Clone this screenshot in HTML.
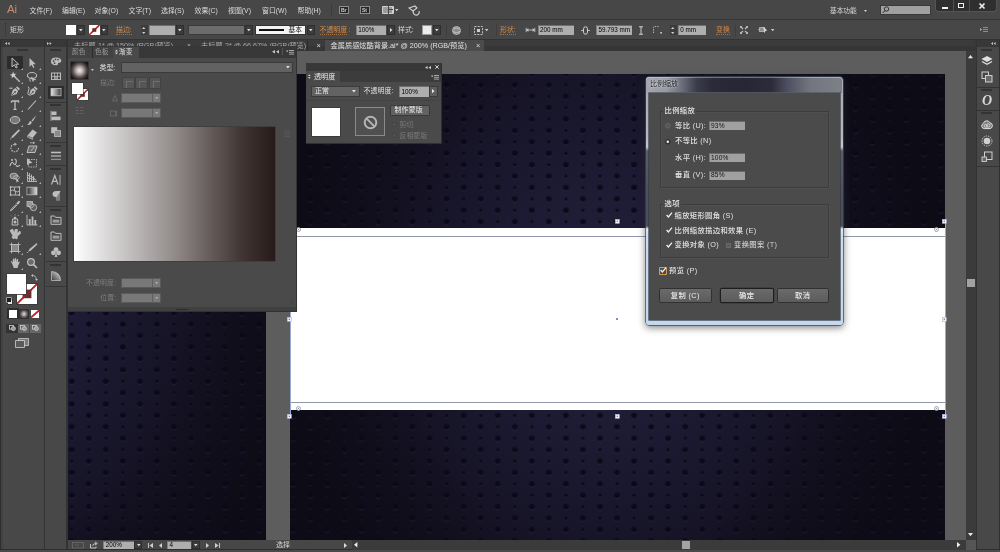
<!DOCTYPE html>
<html lang="zh-CN"><head><meta charset="utf-8"><title>Adobe Illustrator</title>
<style>
html,body{margin:0;padding:0}
body{width:1000px;height:552px;position:relative;overflow:hidden;background:#474747;font-family:"Liberation Sans","Noto Sans CJK SC",sans-serif;font-size:6.7px;color:#d6d6d6;-webkit-font-smoothing:antialiased;will-change:transform;filter:blur(0.4px)}
.t{position:absolute;white-space:nowrap;line-height:10px;height:10px}
.d{font-family:"Liberation Sans","Noto Sans CJK SC",sans-serif;font-weight:500;letter-spacing:0.35px}
svg{overflow:visible;display:block}
</style></head><body>

<div style="position:absolute;left:68px;top:51px;width:908px;height:489px;background:#5d5d5d;"></div>
<svg style="position:absolute;left:290px;top:73.5px;overflow:hidden" width="655" height="466.5" viewBox="0 0 655 466.5"><defs><pattern id="dots" x="3.26" y="-0.3" width="34.08" height="22.8" patternUnits="userSpaceOnUse"><circle cx="0.00" cy="0.00" r="3.3" fill="url(#dotsh)"/><path d="M-2.90 1.20 A3.2 3.2 0 0 0 2.90 1.20" fill="none" stroke="#fff" stroke-opacity="0.07" stroke-width="0.9"/><circle cx="34.08" cy="0.00" r="3.3" fill="url(#dotsh)"/><path d="M31.18 1.20 A3.2 3.2 0 0 0 36.98 1.20" fill="none" stroke="#fff" stroke-opacity="0.07" stroke-width="0.9"/><circle cx="0.00" cy="22.80" r="3.3" fill="url(#dotsh)"/><path d="M-2.90 24.00 A3.2 3.2 0 0 0 2.90 24.00" fill="none" stroke="#fff" stroke-opacity="0.07" stroke-width="0.9"/><circle cx="34.08" cy="22.80" r="3.3" fill="url(#dotsh)"/><path d="M31.18 24.00 A3.2 3.2 0 0 0 36.98 24.00" fill="none" stroke="#fff" stroke-opacity="0.07" stroke-width="0.9"/><circle cx="17.04" cy="11.40" r="3.3" fill="url(#dotsh)"/><path d="M14.14 12.60 A3.2 3.2 0 0 0 19.94 12.60" fill="none" stroke="#fff" stroke-opacity="0.07" stroke-width="0.9"/><circle cx="17.04" cy="0.00" r="1.9" fill="url(#dotsh)"/><path d="M15.44 0.80 A1.8 1.8 0 0 0 18.64 0.80" fill="none" stroke="#fff" stroke-opacity="0.05" stroke-width="0.8"/><circle cx="17.04" cy="22.80" r="1.9" fill="url(#dotsh)"/><path d="M15.44 23.60 A1.8 1.8 0 0 0 18.64 23.60" fill="none" stroke="#fff" stroke-opacity="0.05" stroke-width="0.8"/><circle cx="0.00" cy="11.40" r="1.9" fill="url(#dotsh)"/><path d="M-1.60 12.20 A1.8 1.8 0 0 0 1.60 12.20" fill="none" stroke="#fff" stroke-opacity="0.05" stroke-width="0.8"/><circle cx="34.08" cy="11.40" r="1.9" fill="url(#dotsh)"/><path d="M32.48 12.20 A1.8 1.8 0 0 0 35.68 12.20" fill="none" stroke="#fff" stroke-opacity="0.05" stroke-width="0.8"/></pattern><radialGradient id="dotsh"><stop offset="0" stop-color="#0b0919" stop-opacity="1"/><stop offset="0.65" stop-color="#0b0919" stop-opacity="0.95"/><stop offset="1" stop-color="#0b0919" stop-opacity="0.45"/></radialGradient><radialGradient id="glow" cx="0" cy="0" r="1" gradientUnits="userSpaceOnUse" gradientTransform="translate(318 234) scale(325 400)"><stop offset="0" stop-color="#22203b"/><stop offset="0.3" stop-color="#1e1c35"/><stop offset="0.6" stop-color="#161426"/><stop offset="0.8" stop-color="#100e1b"/><stop offset="1" stop-color="#0d0b15"/></radialGradient></defs><rect width="655" height="467" fill="url(#glow)"/><rect width="655" height="467" fill="url(#dots)"/></svg>
<svg style="position:absolute;left:68px;top:73.5px;overflow:hidden" width="198" height="466.5" viewBox="0 0 198 466.5"><defs><pattern id="dots2" x="20.78" y="-0.3" width="34.08" height="22.8" patternUnits="userSpaceOnUse"><circle cx="0.00" cy="0.00" r="3.3" fill="url(#dots2h)"/><path d="M-2.90 1.20 A3.2 3.2 0 0 0 2.90 1.20" fill="none" stroke="#fff" stroke-opacity="0.07" stroke-width="0.9"/><circle cx="34.08" cy="0.00" r="3.3" fill="url(#dots2h)"/><path d="M31.18 1.20 A3.2 3.2 0 0 0 36.98 1.20" fill="none" stroke="#fff" stroke-opacity="0.07" stroke-width="0.9"/><circle cx="0.00" cy="22.80" r="3.3" fill="url(#dots2h)"/><path d="M-2.90 24.00 A3.2 3.2 0 0 0 2.90 24.00" fill="none" stroke="#fff" stroke-opacity="0.07" stroke-width="0.9"/><circle cx="34.08" cy="22.80" r="3.3" fill="url(#dots2h)"/><path d="M31.18 24.00 A3.2 3.2 0 0 0 36.98 24.00" fill="none" stroke="#fff" stroke-opacity="0.07" stroke-width="0.9"/><circle cx="17.04" cy="11.40" r="3.3" fill="url(#dots2h)"/><path d="M14.14 12.60 A3.2 3.2 0 0 0 19.94 12.60" fill="none" stroke="#fff" stroke-opacity="0.07" stroke-width="0.9"/><circle cx="17.04" cy="0.00" r="1.9" fill="url(#dots2h)"/><path d="M15.44 0.80 A1.8 1.8 0 0 0 18.64 0.80" fill="none" stroke="#fff" stroke-opacity="0.05" stroke-width="0.8"/><circle cx="17.04" cy="22.80" r="1.9" fill="url(#dots2h)"/><path d="M15.44 23.60 A1.8 1.8 0 0 0 18.64 23.60" fill="none" stroke="#fff" stroke-opacity="0.05" stroke-width="0.8"/><circle cx="0.00" cy="11.40" r="1.9" fill="url(#dots2h)"/><path d="M-1.60 12.20 A1.8 1.8 0 0 0 1.60 12.20" fill="none" stroke="#fff" stroke-opacity="0.05" stroke-width="0.8"/><circle cx="34.08" cy="11.40" r="1.9" fill="url(#dots2h)"/><path d="M32.48 12.20 A1.8 1.8 0 0 0 35.68 12.20" fill="none" stroke="#fff" stroke-opacity="0.05" stroke-width="0.8"/></pattern><radialGradient id="dots2h"><stop offset="0" stop-color="#0b0919" stop-opacity="1"/><stop offset="0.65" stop-color="#0b0919" stop-opacity="0.95"/><stop offset="1" stop-color="#0b0919" stop-opacity="0.45"/></radialGradient><radialGradient id="glow2" cx="0" cy="0" r="1" gradientUnits="userSpaceOnUse" gradientTransform="translate(-95 234) scale(330 380)"><stop offset="0" stop-color="#22203b"/><stop offset="0.3" stop-color="#1e1c35"/><stop offset="0.6" stop-color="#161426"/><stop offset="0.8" stop-color="#100e1b"/><stop offset="1" stop-color="#0d0b15"/></radialGradient></defs><rect width="198" height="467" fill="url(#glow2)"/><rect width="198" height="467" fill="url(#dots2)"/></svg>
<div style="position:absolute;left:290px;top:228.3px;width:655px;height:181.7px;background:#ffffff;"></div>
<div style="position:absolute;left:290px;top:236px;width:655px;height:1px;background:#8f97a8;"></div>
<div style="position:absolute;left:290px;top:402px;width:655px;height:1px;background:#8f97a8;"></div>
<div style="position:absolute;left:289.5px;top:221px;width:0.8px;height:196px;background:#9aa8d4;"></div>
<div style="position:absolute;left:944.6px;top:221px;width:0.8px;height:196px;background:#9aa8d4;"></div>
<svg style="position:absolute;left:287.2px;top:219.2px;" width="4.6" height="4.6" viewBox="0 0 4.6 4.6"><rect x="0.3" y="0.3" width="4" height="4" fill="#f4f6fb" stroke="#aab4dc" stroke-width="0.6"/><rect x="1.7" y="1.7" width="1.2" height="1.2" fill="#5c6894"/></svg>
<svg style="position:absolute;left:614.7px;top:219.2px;" width="4.6" height="4.6" viewBox="0 0 4.6 4.6"><rect x="0.3" y="0.3" width="4" height="4" fill="#f4f6fb" stroke="#aab4dc" stroke-width="0.6"/><rect x="1.7" y="1.7" width="1.2" height="1.2" fill="#5c6894"/></svg>
<svg style="position:absolute;left:942.4000000000001px;top:219.2px;" width="4.6" height="4.6" viewBox="0 0 4.6 4.6"><rect x="0.3" y="0.3" width="4" height="4" fill="#f4f6fb" stroke="#aab4dc" stroke-width="0.6"/><rect x="1.7" y="1.7" width="1.2" height="1.2" fill="#5c6894"/></svg>
<svg style="position:absolute;left:287.2px;top:316.7px;" width="4.6" height="4.6" viewBox="0 0 4.6 4.6"><rect x="0.3" y="0.3" width="4" height="4" fill="#f4f6fb" stroke="#aab4dc" stroke-width="0.6"/><rect x="1.7" y="1.7" width="1.2" height="1.2" fill="#5c6894"/></svg>
<svg style="position:absolute;left:942.4000000000001px;top:316.7px;" width="4.6" height="4.6" viewBox="0 0 4.6 4.6"><rect x="0.3" y="0.3" width="4" height="4" fill="#f4f6fb" stroke="#aab4dc" stroke-width="0.6"/><rect x="1.7" y="1.7" width="1.2" height="1.2" fill="#5c6894"/></svg>
<svg style="position:absolute;left:287.2px;top:414.2px;" width="4.6" height="4.6" viewBox="0 0 4.6 4.6"><rect x="0.3" y="0.3" width="4" height="4" fill="#f4f6fb" stroke="#aab4dc" stroke-width="0.6"/><rect x="1.7" y="1.7" width="1.2" height="1.2" fill="#5c6894"/></svg>
<svg style="position:absolute;left:614.7px;top:414.2px;" width="4.6" height="4.6" viewBox="0 0 4.6 4.6"><rect x="0.3" y="0.3" width="4" height="4" fill="#f4f6fb" stroke="#aab4dc" stroke-width="0.6"/><rect x="1.7" y="1.7" width="1.2" height="1.2" fill="#5c6894"/></svg>
<svg style="position:absolute;left:942.4000000000001px;top:414.2px;" width="4.6" height="4.6" viewBox="0 0 4.6 4.6"><rect x="0.3" y="0.3" width="4" height="4" fill="#f4f6fb" stroke="#aab4dc" stroke-width="0.6"/><rect x="1.7" y="1.7" width="1.2" height="1.2" fill="#5c6894"/></svg>
<div style="position:absolute;left:615.7px;top:317.7px;width:2.6px;height:2.6px;background:#7d8fc0;"></div>
<svg style="position:absolute;left:295.5px;top:227.1px;" width="5" height="5" viewBox="0 0 5 5"><circle cx="2.5" cy="2.5" r="2" fill="#fff" stroke="#8a93a8" stroke-width="0.8"/><circle cx="2.5" cy="2.5" r="0.7" fill="#8a93a8"/></svg>
<svg style="position:absolute;left:934.0px;top:227.1px;" width="5" height="5" viewBox="0 0 5 5"><circle cx="2.5" cy="2.5" r="2" fill="#fff" stroke="#8a93a8" stroke-width="0.8"/><circle cx="2.5" cy="2.5" r="0.7" fill="#8a93a8"/></svg>
<svg style="position:absolute;left:295.5px;top:406.0px;" width="5" height="5" viewBox="0 0 5 5"><circle cx="2.5" cy="2.5" r="2" fill="#fff" stroke="#8a93a8" stroke-width="0.8"/><circle cx="2.5" cy="2.5" r="0.7" fill="#8a93a8"/></svg>
<svg style="position:absolute;left:934.0px;top:406.0px;" width="5" height="5" viewBox="0 0 5 5"><circle cx="2.5" cy="2.5" r="2" fill="#fff" stroke="#8a93a8" stroke-width="0.8"/><circle cx="2.5" cy="2.5" r="0.7" fill="#8a93a8"/></svg>
<div style="position:absolute;left:68px;top:39.5px;width:908px;height:11.5px;background:#3b3b3b;"></div>
<div style="position:absolute;left:68px;top:46px;width:908px;height:5px;background:#363636;"></div>
<div class="t" style="left:74px;top:40.6px;color:#a8a8a8;font-size:7.2px;">未标题-1* @ 150% (RGB/预览)</div>
<div class="t" style="left:187px;top:40.6px;color:#c0c0c0;font-size:7px;">×</div>
<div class="t" style="left:201px;top:40.6px;color:#a8a8a8;font-size:7.2px;">未标题-2* @ 66.67% (RGB/预览)</div>
<div style="position:absolute;left:307px;top:40px;width:1px;height:11px;background:#2c2c2c;"></div>
<div class="t" style="left:316.5px;top:40.6px;color:#d8d8d8;font-size:7.5px;">×</div>
<div style="position:absolute;left:325.3px;top:39.6px;width:158.4px;height:11.4px;background:#4b4b4b;"></div>
<div class="t" style="left:330.6px;top:40.6px;color:#e0e0e0;font-size:7.2px;">金属质感炫酷背景.ai* @ 200% (RGB/预览)</div>
<div class="t" style="left:476px;top:40.6px;color:#d8d8d8;font-size:7.5px;">×</div>
<div style="position:absolute;left:0px;top:0px;width:1000px;height:18.5px;background:#474747;"></div>
<div style="position:absolute;left:0px;top:18.5px;width:1000px;height:1.1px;background:#363636;"></div>
<div class="t" style="left:7px;top:2px;height:14px;line-height:14px;font-size:11.5px;font-weight:normal;color:#c98d6c;letter-spacing:-0.2px">Ai</div>
<div class="t" style="left:29.5px;top:5.5px;color:#dcdcdc;font-size:6.9px;">文件(F)</div>
<div class="t" style="left:62px;top:5.5px;color:#dcdcdc;font-size:6.9px;">编辑(E)</div>
<div class="t" style="left:94.5px;top:5.5px;color:#dcdcdc;font-size:6.9px;">对象(O)</div>
<div class="t" style="left:128.5px;top:5.5px;color:#dcdcdc;font-size:6.9px;">文字(T)</div>
<div class="t" style="left:161px;top:5.5px;color:#dcdcdc;font-size:6.9px;">选择(S)</div>
<div class="t" style="left:194.5px;top:5.5px;color:#dcdcdc;font-size:6.9px;">效果(C)</div>
<div class="t" style="left:228px;top:5.5px;color:#dcdcdc;font-size:6.9px;">视图(V)</div>
<div class="t" style="left:262px;top:5.5px;color:#dcdcdc;font-size:6.9px;">窗口(W)</div>
<div class="t" style="left:297.5px;top:5.5px;color:#dcdcdc;font-size:6.9px;">帮助(H)</div>
<div style="position:absolute;left:330.5px;top:4px;width:1px;height:12px;background:#3a3a3a;"></div>
<div style="position:absolute;left:339px;top:5.5px;width:10px;height:8.5px;background:#262626;box-sizing:border-box;border:0.8px solid #8e8e8e;border-radius:0.5px"></div>
<div class="t" style="left:341px;top:5px;color:#d0d0d0;font-size:5px;font-weight:bold">Br</div>
<div style="position:absolute;left:360px;top:5.5px;width:10px;height:8.5px;background:#262626;box-sizing:border-box;border:0.8px solid #8e8e8e;border-radius:0.5px"></div>
<div class="t" style="left:362px;top:5px;color:#d0d0d0;font-size:5px;font-weight:bold">St</div>
<div style="position:absolute;left:382px;top:5.5px;width:11.5px;height:8.5px;background:#d0d0d0;border-radius:1px"><div style="position:absolute;left:1px;top:1px;width:4.5px;height:6.5px;background:#9a9a9a"></div><div style="position:absolute;left:6.3px;top:1px;width:4.2px;height:2.8px;background:#9a9a9a"></div><div style="position:absolute;left:6.3px;top:4.6px;width:4.2px;height:2.9px;background:#9a9a9a"></div><div style="position:absolute;left:5.5px;top:0;width:0.8px;height:8.5px;background:#474747"></div><div style="position:absolute;left:6.3px;top:3.8px;width:5.2px;height:0.8px;background:#474747"></div></div>
<svg style="position:absolute;left:395.25px;top:8.9px" width="3.5" height="2.2" viewBox="0 0 3.5 2.2"><polygon points="0,0 3.5,0 1.75,2.2" fill="#d0d0d0"/></svg>
<svg style="position:absolute;left:408px;top:5px;" width="13" height="10" viewBox="0 0 13 10"><path d="M1 3 L7 1 L9 3 L5 6 Z M6 5 a3 3 0 1 0 5 1" fill="none" stroke="#cfcfcf" stroke-width="1.1"/></svg>
<div class="t" style="left:830px;top:5.5px;color:#d8d8d8;font-size:6.7px;">基本功能</div>
<svg style="position:absolute;left:863.5px;top:10.0px" width="3" height="2" viewBox="0 0 3 2"><polygon points="0,0 3,0 1.5,2" fill="#d0d0d0"/></svg>
<div style="position:absolute;left:880.2px;top:5.2px;width:50.6px;height:9.5px;background:#a0a0a0;box-sizing:border-box;border:0.6px solid #3a3a3a"></div>
<svg style="position:absolute;left:882px;top:6px;" width="8" height="8" viewBox="0 0 8 8"><circle cx="4.5" cy="3" r="2.2" fill="none" stroke="#2a2a2a" stroke-width="0.9"/><path d="M3 4.6 L0.8 7" stroke="#2a2a2a" stroke-width="1"/></svg>
<div style="position:absolute;left:936.3px;top:-1px;width:59.5px;height:11.9px;background:#2f2f2f;border-radius:0 0 2.5px 2.5px;box-shadow:0 0 0 0.7px #5a5a5a"></div>
<div style="position:absolute;left:953px;top:0px;width:0.9px;height:10.9px;background:#505050;"></div>
<div style="position:absolute;left:969px;top:0px;width:0.9px;height:10.9px;background:#505050;"></div>
<div style="position:absolute;left:942px;top:7px;width:6px;height:1.8px;background:#f0f0f0;"></div>
<div style="position:absolute;left:958px;top:3.2px;width:6.2px;height:5.2px;background:transparent;box-sizing:border-box;border:1.4px solid #f0f0f0"></div>
<svg style="position:absolute;left:978.5px;top:3px;" width="6" height="6" viewBox="0 0 6 6"><path d="M0.5 0.5 L5.5 5.5 M5.5 0.5 L0.5 5.5" stroke="#f0f0f0" stroke-width="1.6"/></svg>
<div style="position:absolute;left:0px;top:19.6px;width:1000px;height:19px;background:#474747;"></div>
<div style="position:absolute;left:0px;top:38.6px;width:1000px;height:1.4px;background:#333;"></div>
<div style="position:absolute;left:5px;top:23px;width:1px;height:1px;background:#2e2e2e;"></div>
<div style="position:absolute;left:5px;top:25px;width:1px;height:1px;background:#2e2e2e;"></div>
<div style="position:absolute;left:5px;top:27px;width:1px;height:1px;background:#2e2e2e;"></div>
<div style="position:absolute;left:5px;top:29px;width:1px;height:1px;background:#2e2e2e;"></div>
<div style="position:absolute;left:5px;top:31px;width:1px;height:1px;background:#2e2e2e;"></div>
<div style="position:absolute;left:5px;top:33px;width:1px;height:1px;background:#2e2e2e;"></div>
<div style="position:absolute;left:5px;top:35px;width:1px;height:1px;background:#2e2e2e;"></div>
<div class="t" style="left:10px;top:24.5px;color:#d8d8d8;font-size:6.9px;">矩形</div>
<div style="position:absolute;left:65.5px;top:25px;width:10.5px;height:10px;background:#ffffff;"></div>
<div style="position:absolute;left:77px;top:25px;width:7.5px;height:10px;background:#3c3c3c;box-sizing:border-box;border:0.5px solid #2e2e2e"></div>
<svg style="position:absolute;left:78.95px;top:29.2px" width="3.6" height="2.2" viewBox="0 0 3.6 2.2"><polygon points="0,0 3.6,0 1.8,2.2" fill="#dcdcdc"/></svg>
<div style="position:absolute;left:89px;top:25px;width:10.5px;height:10px;background:#ffffff;overflow:hidden"><svg width="10.5" height="10" style="position:absolute;left:0;top:0"><path d="M0 10 L10.5 0" stroke="#c0202a" stroke-width="1.6"/><rect x="3.3" y="3.2" width="4" height="3.6" fill="#6a2a2a"/></svg></div>
<div style="position:absolute;left:100.5px;top:25px;width:7.5px;height:10px;background:#3c3c3c;box-sizing:border-box;border:0.5px solid #2e2e2e"></div>
<svg style="position:absolute;left:102.45px;top:29.2px" width="3.6" height="2.2" viewBox="0 0 3.6 2.2"><polygon points="0,0 3.6,0 1.8,2.2" fill="#dcdcdc"/></svg>
<div class="t" style="left:116px;top:24.5px;color:#d78b45;font-size:6.9px;border-bottom:0.6px dotted rgba(215,139,69,0.65);height:9px;line-height:10px">描边:</div>
<div style="position:absolute;left:140.5px;top:25px;width:7px;height:10px;background:#3c3c3c;"></div>
<svg style="position:absolute;left:142.3px;top:26.5px" width="3.4" height="2" viewBox="0 0 3.4 2"><polygon points="0,2 3.4,2 1.7,0" fill="#d0d0d0"/></svg>
<svg style="position:absolute;left:142.3px;top:31.5px" width="3.4" height="2" viewBox="0 0 3.4 2"><polygon points="0,0 3.4,0 1.7,2" fill="#d0d0d0"/></svg>
<div style="position:absolute;left:149px;top:25px;width:26px;height:10px;background:#aeaeae;box-sizing:border-box;border-top:1px solid #6e6e6e;border-left:1px solid #808080"></div>
<div style="position:absolute;left:176px;top:25px;width:8px;height:10px;background:#3c3c3c;box-sizing:border-box;border:0.5px solid #2e2e2e"></div>
<svg style="position:absolute;left:178.2px;top:29.2px" width="3.6" height="2.2" viewBox="0 0 3.6 2.2"><polygon points="0,0 3.6,0 1.8,2.2" fill="#dcdcdc"/></svg>
<div style="position:absolute;left:188px;top:25px;width:57px;height:10px;background:#6c6c6c;box-sizing:border-box;border:0.5px solid #3a3a3a"></div>
<div style="position:absolute;left:245px;top:25px;width:7.5px;height:10px;background:#3c3c3c;box-sizing:border-box;border:0.5px solid #2e2e2e"></div>
<svg style="position:absolute;left:246.95px;top:29.2px" width="3.6" height="2.2" viewBox="0 0 3.6 2.2"><polygon points="0,0 3.6,0 1.8,2.2" fill="#dcdcdc"/></svg>
<div style="position:absolute;left:255px;top:24.7px;width:50.5px;height:10px;background:#f4f4f4;box-sizing:border-box;border:0.5px solid #333"></div>
<div style="position:absolute;left:258.7px;top:29px;width:25.5px;height:1.6px;background:#111;"></div>
<div class="t" style="left:288.5px;top:24.7px;color:#111;font-size:6.7px;">基本</div>
<div style="position:absolute;left:307px;top:25px;width:7.5px;height:10px;background:#3c3c3c;box-sizing:border-box;border:0.5px solid #2e2e2e"></div>
<svg style="position:absolute;left:308.95px;top:29.2px" width="3.6" height="2.2" viewBox="0 0 3.6 2.2"><polygon points="0,0 3.6,0 1.8,2.2" fill="#dcdcdc"/></svg>
<div class="t" style="left:319.5px;top:24.5px;color:#d78b45;font-size:6.9px;border-bottom:0.6px dotted rgba(215,139,69,0.65);height:9px;line-height:10px">不透明度</div>
<div class="t" style="left:348.5px;top:24.5px;color:#d78b45;font-size:6.9px;">:</div>
<div style="position:absolute;left:355.7px;top:24.7px;width:30px;height:10px;background:#aeaeae;box-sizing:border-box;border-top:1px solid #6e6e6e;border-left:1px solid #808080"><div class="t" style="left:1.5px;top:-0.5999999999999996px;color:#000;font-size:6.3px">100%</div></div>
<div style="position:absolute;left:387px;top:25px;width:7.5px;height:10px;background:#3c3c3c;box-sizing:border-box;border:0.5px solid #2e2e2e"></div>
<svg style="position:absolute;left:389.75px;top:28.0px" width="2.4" height="4" viewBox="0 0 2.4 4"><polygon points="0,0 2.4,2.0 0,4" fill="#dcdcdc"/></svg>
<div class="t" style="left:398px;top:24.5px;color:#d8d8d8;font-size:6.9px;">样式:</div>
<div style="position:absolute;left:422px;top:25px;width:10px;height:10px;background:#ececec;box-sizing:border-box;border:0.5px solid #999"></div>
<div style="position:absolute;left:433px;top:25px;width:7.5px;height:10px;background:#3c3c3c;box-sizing:border-box;border:0.5px solid #2e2e2e"></div>
<svg style="position:absolute;left:434.95px;top:29.2px" width="3.6" height="2.2" viewBox="0 0 3.6 2.2"><polygon points="0,0 3.6,0 1.8,2.2" fill="#dcdcdc"/></svg>
<div style="position:absolute;left:445.5px;top:23px;width:0.9px;height:14px;background:#3e3e3e;"></div>
<svg style="position:absolute;left:451.5px;top:25.5px;" width="9" height="9" viewBox="0 0 9 9"><circle cx="4.5" cy="4.5" r="4" fill="#8a8a8a" stroke="#c8c8c8" stroke-width="0.8"/><path d="M2 3 Q4.5 1 7 3 M1 5.5 Q4.5 8 8 5.5" stroke="#d8d8d8" stroke-width="0.7" fill="none"/></svg>
<div style="position:absolute;left:469px;top:23px;width:0.9px;height:14px;background:#3e3e3e;"></div>
<svg style="position:absolute;left:474px;top:25.5px;" width="9" height="9" viewBox="0 0 9 9"><rect x="0.5" y="0.5" width="8" height="8" fill="none" stroke="#cfcfcf" stroke-width="0.9" stroke-dasharray="2 1.2"/><rect x="3" y="3" width="3" height="3" fill="#cfcfcf"/></svg>
<svg style="position:absolute;left:485.3px;top:29.4px" width="3.4" height="2.2" viewBox="0 0 3.4 2.2"><polygon points="0,0 3.4,0 1.7,2.2" fill="#d0d0d0"/></svg>
<div style="position:absolute;left:496px;top:23px;width:0.9px;height:14px;background:#3e3e3e;"></div>
<div class="t" style="left:500px;top:24.5px;color:#d78b45;font-size:6.9px;border-bottom:0.6px dotted rgba(215,139,69,0.65);height:9px;line-height:10px">形状:</div>
<svg style="position:absolute;left:525.5px;top:27px;" width="9" height="6" viewBox="0 0 9 6"><path d="M0 3 L2.4 1.2 L2.4 4.8 Z M9 3 L6.6 1.2 L6.6 4.8 Z" fill="#cfcfcf"/><path d="M2 3 L7 3 M0.2 0.8 V5.2 M8.8 0.8 V5.2" stroke="#cfcfcf" stroke-width="0.8"/></svg>
<div style="position:absolute;left:537.5px;top:24.7px;width:36px;height:10px;background:#aeaeae;box-sizing:border-box;border-top:1px solid #6e6e6e;border-left:1px solid #808080"><div class="t" style="left:1.5px;top:-0.5999999999999996px;color:#000;font-size:6.3px">200 mm</div></div>
<svg style="position:absolute;left:581px;top:25.5px;" width="9" height="9" viewBox="0 0 9 9"><rect x="2.5" y="0.8" width="4" height="7.4" rx="2" fill="none" stroke="#cfcfcf" stroke-width="1"/><path d="M0 4.5 L2 4.5 M7 4.5 L9 4.5" stroke="#cfcfcf" stroke-width="0.8"/></svg>
<div style="position:absolute;left:596px;top:24.7px;width:35.7px;height:10px;background:#aeaeae;box-sizing:border-box;border-top:1px solid #6e6e6e;border-left:1px solid #808080"><div class="t" style="left:1.5px;top:-0.5999999999999996px;color:#000;font-size:6.3px">59.793 mm</div></div>
<svg style="position:absolute;left:637.5px;top:25.5px;" width="6" height="9" viewBox="0 0 6 9"><path d="M3 0.5 L3 8.5 M1 0.8 L5 0.8 M1 8.2 L5 8.2" stroke="#cfcfcf" stroke-width="1"/></svg>
<svg style="position:absolute;left:652.5px;top:26px;" width="9" height="8" viewBox="0 0 9 8"><path d="M0.5 7 L0.5 1.5 Q0.5 0.5 1.5 0.5 L6 0.5" fill="none" stroke="#bdbdbd" stroke-width="0.9" stroke-dasharray="1.4 1"/><rect x="7.3" y="6" width="1.6" height="1.6" fill="#cfcfcf"/></svg>
<div style="position:absolute;left:669.5px;top:25px;width:7px;height:10px;background:#3c3c3c;"></div>
<svg style="position:absolute;left:671.3px;top:26.5px" width="3.4" height="2" viewBox="0 0 3.4 2"><polygon points="0,2 3.4,2 1.7,0" fill="#d0d0d0"/></svg>
<svg style="position:absolute;left:671.3px;top:31.5px" width="3.4" height="2" viewBox="0 0 3.4 2"><polygon points="0,0 3.4,0 1.7,2" fill="#d0d0d0"/></svg>
<div style="position:absolute;left:677.7px;top:24.7px;width:28.6px;height:10px;background:#aeaeae;box-sizing:border-box;border-top:1px solid #6e6e6e;border-left:1px solid #808080"><div class="t" style="left:1.5px;top:-0.5999999999999996px;color:#000;font-size:6.3px">0 mm</div></div>
<div class="t" style="left:716px;top:24.5px;color:#d78b45;font-size:6.9px;border-bottom:0.6px dotted rgba(215,139,69,0.65);height:9px;line-height:10px">变换</div>
<div style="position:absolute;left:734.5px;top:23px;width:0.9px;height:14px;background:#3e3e3e;"></div>
<svg style="position:absolute;left:739.5px;top:26px;" width="8" height="8" viewBox="0 0 8 8"><path d="M0.8 0.8 L3 3 M7.2 0.8 L5 3 M0.8 7.2 L3 5 M7.2 7.2 L5 5" stroke="#c4c4c4" stroke-width="1.1"/><path d="M0 0 H2.2 L0 2.2 Z M8 0 H5.8 L8 2.2 Z M0 8 H2.2 L0 5.8 Z M8 8 H5.8 L8 5.8 Z" fill="#c4c4c4"/></svg>
<svg style="position:absolute;left:757.5px;top:26px;" width="10" height="8" viewBox="0 0 10 8"><rect x="1.6" y="1.6" width="5" height="4" fill="#8c8c8c" stroke="#bdbdbd" stroke-width="0.8"/><path d="M0 3.6 H1.6" stroke="#bdbdbd" stroke-width="0.8"/><path d="M5.2 0.8 L9.4 4.6 L7.4 4.8 L6.6 7.6 Z" fill="#dcdcdc"/></svg>
<svg style="position:absolute;left:770.8px;top:29.4px" width="3.4" height="2.2" viewBox="0 0 3.4 2.2"><polygon points="0,0 3.4,0 1.7,2.2" fill="#d0d0d0"/></svg>
<svg style="position:absolute;left:980px;top:26.8px;" width="8" height="6" viewBox="0 0 8 6"><path d="M3 0.5 H8 M3 2.5 H8 M3 4.5 H8" stroke="#a0a0a0" stroke-width="0.8"/><path d="M0 1 L2.2 2.5 L0 4 Z" fill="#a8a8a8"/></svg>
<div style="position:absolute;left:0px;top:39.5px;width:1.3px;height:512.5px;background:#2e2e2e;"></div>
<div style="position:absolute;left:1.3px;top:39.5px;width:1.7px;height:512.5px;background:#424242;"></div>
<div style="position:absolute;left:1.3px;top:39.5px;width:42.3px;height:7.3px;background:#383838;"></div>
<div style="position:absolute;left:3px;top:46.8px;width:40.6px;height:502.2px;background:#484848;"></div>
<div style="position:absolute;left:43.6px;top:39.5px;width:1.7px;height:512.5px;background:#333;"></div>
<div style="position:absolute;left:45.3px;top:39.5px;width:21.1px;height:7.3px;background:#383838;"></div>
<div style="position:absolute;left:45.3px;top:46.8px;width:21.1px;height:502.2px;background:#484848;"></div>
<div style="position:absolute;left:66.4px;top:39.5px;width:1.6px;height:512.5px;background:#333;"></div>
<svg style="position:absolute;left:5.2px;top:41.7px;" width="4.6" height="3" viewBox="0 0 4.6 3"><path d="M2 0 L0 1.5 L2 3 Z M4.6 0 L2.6 1.5 L4.6 3 Z" fill="#c8c8c8"/></svg>
<svg style="position:absolute;left:47.2px;top:41.7px;" width="4.6" height="3" viewBox="0 0 4.6 3"><path d="M0 0 L2 1.5 L0 3 Z M2.6 0 L4.6 1.5 L2.6 3 Z" fill="#c8c8c8"/></svg>
<div style="position:absolute;left:17.2px;top:48.5px;width:11.2px;height:2.3px;background:#343434;"></div>
<div style="position:absolute;left:6.5px;top:56.2px;width:16.3px;height:12.4px;background:#2c2c2c;border-radius:1px"></div>
<svg style="position:absolute;left:8.5px;top:56.5px;" width="12" height="12" viewBox="0 0 12 12"><path d="M3 1 L3 10 L5.3 7.8 L7 11 L8.3 10.4 L6.7 7.3 L9.6 7.2 Z" fill="#3a3a3a" stroke="#cccccc" stroke-width="0.9"/></svg>
<svg style="position:absolute;left:26.0px;top:56.5px;" width="12" height="12" viewBox="0 0 12 12"><path d="M3.5 1 L3.5 10 L5.6 7.8 L7.2 11 L8.4 10.4 L6.9 7.3 L9.8 7.2 Z" fill="#bdbdbd"/></svg>
<svg style="position:absolute;left:20.6px;top:67.5px;" width="2" height="2" viewBox="0 0 2 2"><path d="M2 0 V2 H0 Z" fill="#b0b0b0"/></svg>
<svg style="position:absolute;left:38.5px;top:67.5px;" width="2" height="2" viewBox="0 0 2 2"><path d="M2 0 V2 H0 Z" fill="#b0b0b0"/></svg>
<svg style="position:absolute;left:8.5px;top:70.8px;" width="12" height="12" viewBox="0 0 12 12"><path d="M4.5 4.5 L10.8 10.8" stroke="#bdbdbd" stroke-width="1.4"/><path d="M4.2 0.6 L5 3 L7.6 2.6 L5.6 4.3 L7 6.6 L4.5 5.4 L2.6 7.4 L2.9 4.8 L0.6 3.8 L3.1 3.2 Z" fill="#d0d0d0"/></svg>
<svg style="position:absolute;left:26.0px;top:70.8px;" width="12" height="12" viewBox="0 0 12 12"><ellipse cx="6" cy="4.5" rx="4.6" ry="3" fill="none" stroke="#bdbdbd" stroke-width="1.1"/><path d="M4 7 Q3 9 4.5 11 M5 6 L7 10.5 L8 8.5 L10 8.8 Z" fill="#bdbdbd" stroke="#bdbdbd" stroke-width="0.6"/></svg>
<svg style="position:absolute;left:20.6px;top:81.8px;" width="2" height="2" viewBox="0 0 2 2"><path d="M2 0 V2 H0 Z" fill="#b0b0b0"/></svg>
<svg style="position:absolute;left:38.5px;top:81.8px;" width="2" height="2" viewBox="0 0 2 2"><path d="M2 0 V2 H0 Z" fill="#b0b0b0"/></svg>
<svg style="position:absolute;left:8.5px;top:85.1px;" width="12" height="12" viewBox="0 0 12 12"><path d="M8.2 1.2 L11 4 L9.6 5.2 L7 2.6 Z" fill="#bdbdbd"/><path d="M6.5 3.1 L9.1 5.7 L7.8 9 L2 11 L3.8 5 Z" fill="#bdbdbd"/><path d="M2.4 10.6 L5.8 7.2" stroke="#484848" stroke-width="0.8"/><circle cx="6.2" cy="6.8" r="0.9" fill="#484848"/><path d="M0.3 3.2 H3.6" stroke="#bdbdbd" stroke-width="1.1"/></svg>
<svg style="position:absolute;left:26.0px;top:85.1px;" width="12" height="12" viewBox="0 0 12 12"><path d="M9.0 1.2 L11.8 4 L10.4 5.2 L7.8 2.6 Z" fill="#bdbdbd"/><path d="M7.3 3.1 L9.9 5.7 L8.6 9 L2.8 11 L4.6 5 Z" fill="#bdbdbd"/><path d="M3.2 10.6 L6.6 7.2" stroke="#484848" stroke-width="0.8"/><circle cx="7.0" cy="6.8" r="0.9" fill="#484848"/><path d="M2.2 1.6 Q4 3.2 2.4 6 Q1.2 8.6 2.6 10" fill="none" stroke="#bdbdbd" stroke-width="1"/></svg>
<svg style="position:absolute;left:20.6px;top:96.1px;" width="2" height="2" viewBox="0 0 2 2"><path d="M2 0 V2 H0 Z" fill="#b0b0b0"/></svg>
<svg style="position:absolute;left:38.5px;top:96.1px;" width="2" height="2" viewBox="0 0 2 2"><path d="M2 0 V2 H0 Z" fill="#b0b0b0"/></svg>
<svg style="position:absolute;left:8.5px;top:99.4px;" width="12" height="12" viewBox="0 0 12 12"><path d="M2.5 2 H9.5 V3.8 M2.5 2 V3.8 M6 2 V10.3 M4.4 10.3 H7.6" fill="none" stroke="#bdbdbd" stroke-width="1.3"/></svg>
<svg style="position:absolute;left:26.0px;top:99.4px;" width="12" height="12" viewBox="0 0 12 12"><path d="M2 10.5 L10 1.5" stroke="#bdbdbd" stroke-width="1.1"/></svg>
<svg style="position:absolute;left:20.6px;top:110.4px;" width="2" height="2" viewBox="0 0 2 2"><path d="M2 0 V2 H0 Z" fill="#b0b0b0"/></svg>
<svg style="position:absolute;left:38.5px;top:110.4px;" width="2" height="2" viewBox="0 0 2 2"><path d="M2 0 V2 H0 Z" fill="#b0b0b0"/></svg>
<svg style="position:absolute;left:8.5px;top:113.7px;" width="12" height="12" viewBox="0 0 12 12"><ellipse cx="6" cy="6" rx="4.8" ry="3.6" fill="#7a7a7a" stroke="#bdbdbd" stroke-width="1"/></svg>
<svg style="position:absolute;left:26.0px;top:113.7px;" width="12" height="12" viewBox="0 0 12 12"><path d="M10.5 1 L5.5 6.5 L6.8 7.6 Z" fill="#bdbdbd"/><path d="M5 7 Q6.5 8.5 5 10 Q3 11.5 1 10.5 Q3.2 9.5 3.4 8 Q3.8 6.6 5 7 Z" fill="#bdbdbd"/></svg>
<svg style="position:absolute;left:20.6px;top:124.7px;" width="2" height="2" viewBox="0 0 2 2"><path d="M2 0 V2 H0 Z" fill="#b0b0b0"/></svg>
<svg style="position:absolute;left:38.5px;top:124.7px;" width="2" height="2" viewBox="0 0 2 2"><path d="M2 0 V2 H0 Z" fill="#b0b0b0"/></svg>
<svg style="position:absolute;left:8.5px;top:128.0px;" width="12" height="12" viewBox="0 0 12 12"><path d="M9.8 1.2 L11 2.4 L4.5 9.3 L2 10.5 L3 8 Z" fill="#bdbdbd"/><path d="M2 10.5 L1 11.3" stroke="#bdbdbd" stroke-width="0.8"/></svg>
<svg style="position:absolute;left:26.0px;top:128.0px;" width="12" height="12" viewBox="0 0 12 12"><path d="M6.5 1.5 L11 4.5 L6.5 10 L1.5 7.5 Z" fill="#bdbdbd"/><path d="M1.5 7.5 L1.5 9 L6.5 11.5 L6.5 10" fill="#8a8a8a" stroke="#bdbdbd" stroke-width="0.6"/></svg>
<svg style="position:absolute;left:20.6px;top:139.0px;" width="2" height="2" viewBox="0 0 2 2"><path d="M2 0 V2 H0 Z" fill="#b0b0b0"/></svg>
<svg style="position:absolute;left:38.5px;top:139.0px;" width="2" height="2" viewBox="0 0 2 2"><path d="M2 0 V2 H0 Z" fill="#b0b0b0"/></svg>
<svg style="position:absolute;left:8.5px;top:142.3px;" width="12" height="12" viewBox="0 0 12 12"><path d="M9.5 6 A3.8 3.8 0 1 1 6 2.2" fill="none" stroke="#bdbdbd" stroke-width="1.1" stroke-dasharray="1.6 1"/><path d="M5.5 0.5 L8 2.3 L5.5 4 Z" fill="#bdbdbd"/></svg>
<svg style="position:absolute;left:26.0px;top:142.3px;" width="12" height="12" viewBox="0 0 12 12"><path d="M3 4 H11 L9 10.5 H1 Z" fill="#6a6a6a" stroke="#bdbdbd" stroke-width="1"/><path d="M4 0.8 H8.5 M8.5 0.8 L7 0 M8.5 0.8 L7 1.8" stroke="#bdbdbd" stroke-width="0.8" fill="none"/><path d="M5 9 L8 5" stroke="#bdbdbd" stroke-width="0.8"/></svg>
<svg style="position:absolute;left:20.6px;top:153.3px;" width="2" height="2" viewBox="0 0 2 2"><path d="M2 0 V2 H0 Z" fill="#b0b0b0"/></svg>
<svg style="position:absolute;left:38.5px;top:153.3px;" width="2" height="2" viewBox="0 0 2 2"><path d="M2 0 V2 H0 Z" fill="#b0b0b0"/></svg>
<svg style="position:absolute;left:8.5px;top:156.60000000000002px;" width="12" height="12" viewBox="0 0 12 12"><path d="M1 9 Q2.5 3.5 4.5 6.5 Q6 9 7 6 Q8 2.5 5.5 2 M7 8.5 Q9 10.5 11 8" fill="none" stroke="#bdbdbd" stroke-width="1.2"/><circle cx="3" cy="3" r="1" fill="#bdbdbd"/></svg>
<svg style="position:absolute;left:26.0px;top:156.60000000000002px;" width="12" height="12" viewBox="0 0 12 12"><rect x="2.5" y="2.5" width="8" height="7.5" fill="none" stroke="#bdbdbd" stroke-width="0.9" stroke-dasharray="1.5 1"/><path d="M1 1 L1 8 L3 6.4 L6.5 6 Z" fill="#bdbdbd"/></svg>
<svg style="position:absolute;left:20.6px;top:167.60000000000002px;" width="2" height="2" viewBox="0 0 2 2"><path d="M2 0 V2 H0 Z" fill="#b0b0b0"/></svg>
<svg style="position:absolute;left:38.5px;top:167.60000000000002px;" width="2" height="2" viewBox="0 0 2 2"><path d="M2 0 V2 H0 Z" fill="#b0b0b0"/></svg>
<svg style="position:absolute;left:8.5px;top:170.9px;" width="12" height="12" viewBox="0 0 12 12"><ellipse cx="4.8" cy="5" rx="3.8" ry="2.8" fill="#7a7a7a" stroke="#bdbdbd" stroke-width="0.9"/><ellipse cx="7.5" cy="6.5" rx="2.8" ry="2" fill="none" stroke="#bdbdbd" stroke-width="0.8"/><path d="M7.5 7 L7.5 11.5 L8.8 10.3 L10 11 Z" fill="#dcdcdc"/></svg>
<svg style="position:absolute;left:26.0px;top:170.9px;" width="12" height="12" viewBox="0 0 12 12"><path d="M1.5 1 V10.5 H11 M3.5 2 V10.5 M5.5 3.5 V10.5 M7.5 5 V10.5 M1.5 4 L9 7.5 M1.5 7 L10.5 9" fill="none" stroke="#bdbdbd" stroke-width="0.9"/></svg>
<svg style="position:absolute;left:20.6px;top:181.9px;" width="2" height="2" viewBox="0 0 2 2"><path d="M2 0 V2 H0 Z" fill="#b0b0b0"/></svg>
<svg style="position:absolute;left:38.5px;top:181.9px;" width="2" height="2" viewBox="0 0 2 2"><path d="M2 0 V2 H0 Z" fill="#b0b0b0"/></svg>
<svg style="position:absolute;left:8.5px;top:185.20000000000002px;" width="12" height="12" viewBox="0 0 12 12"><rect x="1.5" y="2" width="9" height="8" fill="none" stroke="#bdbdbd" stroke-width="0.9"/><path d="M1.5 6 Q4 4 6 6 T10.5 6 M6 2 Q4.5 4 6 6 T6 10" fill="none" stroke="#bdbdbd" stroke-width="0.9"/><rect x="0.8" y="1.3" width="1.6" height="1.6" fill="#bdbdbd"/><rect x="9.6" y="1.3" width="1.6" height="1.6" fill="#bdbdbd"/><rect x="0.8" y="9.2" width="1.6" height="1.6" fill="#bdbdbd"/><rect x="9.6" y="9.2" width="1.6" height="1.6" fill="#bdbdbd"/></svg>
<svg style="position:absolute;left:26.0px;top:185.20000000000002px;" width="12" height="12" viewBox="0 0 12 12"><defs><linearGradient id="tg" x1="0" x2="1"><stop offset="0" stop-color="#2a2a2a"/><stop offset="1" stop-color="#e0e0e0"/></linearGradient></defs><rect x="1" y="2.2" width="10" height="7.6" fill="url(#tg)" stroke="#bdbdbd" stroke-width="0.8"/></svg>
<svg style="position:absolute;left:20.6px;top:196.20000000000002px;" width="2" height="2" viewBox="0 0 2 2"><path d="M2 0 V2 H0 Z" fill="#b0b0b0"/></svg>
<svg style="position:absolute;left:38.5px;top:196.20000000000002px;" width="2" height="2" viewBox="0 0 2 2"><path d="M2 0 V2 H0 Z" fill="#b0b0b0"/></svg>
<svg style="position:absolute;left:8.5px;top:199.5px;" width="12" height="12" viewBox="0 0 12 12"><path d="M10.5 1 Q11.5 2 10.5 3 L8.8 4.7 L7.3 3.2 L9 1.5 Q9.8 0.5 10.5 1 Z" fill="#bdbdbd"/><path d="M7.6 4 L2.2 9.2 L1.5 10.8 L3 10 L8.2 4.8" fill="none" stroke="#bdbdbd" stroke-width="1"/></svg>
<svg style="position:absolute;left:26.0px;top:199.5px;" width="12" height="12" viewBox="0 0 12 12"><rect x="1" y="1.5" width="5.5" height="5" fill="#8a8a8a" stroke="#bdbdbd" stroke-width="0.8"/><circle cx="7.5" cy="7.5" r="3.2" fill="#5e5e5e" stroke="#bdbdbd" stroke-width="0.9"/><circle cx="5" cy="5.3" r="2.6" fill="none" stroke="#bdbdbd" stroke-width="0.7"/></svg>
<svg style="position:absolute;left:20.6px;top:210.5px;" width="2" height="2" viewBox="0 0 2 2"><path d="M2 0 V2 H0 Z" fill="#b0b0b0"/></svg>
<svg style="position:absolute;left:38.5px;top:210.5px;" width="2" height="2" viewBox="0 0 2 2"><path d="M2 0 V2 H0 Z" fill="#b0b0b0"/></svg>
<svg style="position:absolute;left:8.5px;top:213.8px;" width="12" height="12" viewBox="0 0 12 12"><path d="M3.5 5 H8.5 L9 11 H3 Z" fill="none" stroke="#bdbdbd" stroke-width="1"/><rect x="4.8" y="2.8" width="2.4" height="2.2" fill="#bdbdbd"/><circle cx="6" cy="8" r="1.5" fill="#bdbdbd"/><path d="M2 1.5 L2.8 2.3 M9.5 1 L9 2 M6 0.3 V1.5" stroke="#bdbdbd" stroke-width="0.7"/></svg>
<svg style="position:absolute;left:26.0px;top:213.8px;" width="12" height="12" viewBox="0 0 12 12"><path d="M1 0.8 V11 H11.5" fill="none" stroke="#bdbdbd" stroke-width="0.9"/><rect x="2.8" y="5" width="1.8" height="6" fill="#bdbdbd"/><rect x="5.6" y="2.5" width="1.8" height="8.5" fill="#bdbdbd"/><rect x="8.4" y="6" width="1.8" height="5" fill="#bdbdbd"/></svg>
<svg style="position:absolute;left:20.6px;top:224.8px;" width="2" height="2" viewBox="0 0 2 2"><path d="M2 0 V2 H0 Z" fill="#b0b0b0"/></svg>
<svg style="position:absolute;left:38.5px;top:224.8px;" width="2" height="2" viewBox="0 0 2 2"><path d="M2 0 V2 H0 Z" fill="#b0b0b0"/></svg>
<svg style="position:absolute;left:8.5px;top:228.10000000000002px;" width="12" height="12" viewBox="0 0 12 12"><path d="M1 2.5 L3.5 1 L5.5 5 L6 1.5 L8.5 1.5 L8 5.5 L11 3 L11.5 5.5 L8.5 8 L8 11 L5.5 10 L4.5 11 L3 9.5 L3.8 7.5 Z" fill="#b8b8b8" stroke="#cccccc" stroke-width="0.6"/></svg>
<svg style="position:absolute;left:8.5px;top:242.4px;" width="12" height="12" viewBox="0 0 12 12"><rect x="2.5" y="2.5" width="7" height="7" fill="#8a8a8a" stroke="#bdbdbd" stroke-width="0.8"/><path d="M0.5 2.5 H11.5 M0.5 9.5 H11.5 M2.5 0.5 V11.5 M9.5 0.5 V11.5" stroke="#bdbdbd" stroke-width="0.8"/></svg>
<svg style="position:absolute;left:26.0px;top:242.4px;" width="12" height="12" viewBox="0 0 12 12"><path d="M10.8 1 L11.3 2.6 L5 8.5 L2 9.8 L3.5 7 Z" fill="#bdbdbd"/><path d="M2 9.8 L0.8 11" stroke="#bdbdbd" stroke-width="0.9"/></svg>
<svg style="position:absolute;left:20.6px;top:253.4px;" width="2" height="2" viewBox="0 0 2 2"><path d="M2 0 V2 H0 Z" fill="#b0b0b0"/></svg>
<svg style="position:absolute;left:38.5px;top:253.4px;" width="2" height="2" viewBox="0 0 2 2"><path d="M2 0 V2 H0 Z" fill="#b0b0b0"/></svg>
<svg style="position:absolute;left:8.5px;top:256.70000000000005px;" width="12" height="12" viewBox="0 0 12 12"><path d="M3 6.5 L1.8 4.5 Q2.4 3.6 3.2 4.4 L4 5.5 L3.8 2 Q4.6 1.2 5.2 2 L5.6 4.6 L5.8 1.2 Q6.7 0.5 7.2 1.4 L7.3 4.8 L8 2 Q8.9 1.6 9.2 2.5 L8.9 5.6 L10 4.6 Q10.9 4.6 10.6 5.6 L9 9 L8.6 11 H4.6 L4.3 9.4 Z" fill="#bdbdbd"/></svg>
<svg style="position:absolute;left:26.0px;top:256.70000000000005px;" width="12" height="12" viewBox="0 0 12 12"><circle cx="5" cy="5" r="3.4" fill="#6a6a6a" stroke="#bdbdbd" stroke-width="1.2"/><path d="M7.6 7.6 L11 11" stroke="#bdbdbd" stroke-width="1.7"/></svg>
<svg style="position:absolute;left:20.6px;top:267.70000000000005px;" width="2" height="2" viewBox="0 0 2 2"><path d="M2 0 V2 H0 Z" fill="#b0b0b0"/></svg>
<div style="position:absolute;left:16.8px;top:284px;width:20px;height:19.8px;background:#ffffff;overflow:hidden;box-shadow:0 0 0 0.6px #333"><svg width="20" height="20" style="position:absolute;left:0;top:0"><path d="M0 19.8 L20 0" stroke="#c0202a" stroke-width="1.8"/><rect x="5.6" y="5.6" width="8.8" height="8.6" fill="#6b2e30"/><path d="M0 19.8 L20 0" stroke="#c0202a" stroke-width="1.2" opacity="0.55"/></svg></div>
<div style="position:absolute;left:6.5px;top:274px;width:19.5px;height:19.5px;background:#ffffff;box-shadow:0 0 0 0.8px #3a3a3a"></div>
<svg style="position:absolute;left:30.5px;top:273.5px;" width="7" height="7" viewBox="0 0 7 7"><path d="M1 1.5 Q5 1 5.5 6" fill="none" stroke="#bdbdbd" stroke-width="0.9"/><path d="M0 1.6 L2 0 L2 3 Z M5.6 7 L4 5 L7 5 Z" fill="#bdbdbd"/></svg>
<div style="position:absolute;left:8px;top:299.5px;width:4px;height:4px;background:#e8e8e8;box-shadow:0 0 0 0.5px #222"></div>
<div style="position:absolute;left:6.5px;top:298px;width:4px;height:4px;background:#1c1c1c;box-shadow:0 0 0 0.6px #ddd"></div>
<div style="position:absolute;left:6.5px;top:308px;width:12px;height:11px;background:#2e2e2e;"></div>
<div style="position:absolute;left:8.5px;top:310px;width:8px;height:7.5px;background:#ffffff;"></div>
<div style="position:absolute;left:19.5px;top:310px;width:8.5px;height:7.5px;background:radial-gradient(circle,#e8e0e0 0%,#6a6262 55%,#1a1616 100%);box-shadow:0 0 0 0.6px #222"></div>
<div style="position:absolute;left:30.5px;top:310px;width:8.5px;height:7.5px;background:#ffffff;overflow:hidden"><svg width="8.5" height="7.5" style="position:absolute;left:0;top:0"><path d="M0 7.5 L8.5 0" stroke="#c0202a" stroke-width="1.8"/></svg></div>
<div style="position:absolute;left:6px;top:323.5px;width:11.5px;height:9px;background:#333;"></div>
<div style="position:absolute;left:17.5px;top:323.5px;width:11.5px;height:9px;background:#666;"></div>
<div style="position:absolute;left:29px;top:323.5px;width:11.5px;height:9px;background:#666;"></div>
<div style="position:absolute;left:28.7px;top:323.5px;width:0.8px;height:9px;background:#4a4a4a;"></div>
<svg style="position:absolute;left:8.5px;top:325px;" width="7" height="6" viewBox="0 0 7 6"><rect x="0.5" y="0.5" width="4" height="3.6" fill="none" stroke="#cfcfcf" stroke-width="0.8"/><circle cx="4.4" cy="3.6" r="2" fill="#9a9a9a" stroke="#d8d8d8" stroke-width="0.7"/></svg>
<svg style="position:absolute;left:20px;top:325px;" width="7" height="6" viewBox="0 0 7 6"><rect x="0.5" y="0.5" width="4" height="3.6" fill="none" stroke="#cfcfcf" stroke-width="0.8"/><circle cx="4.4" cy="3.6" r="2" fill="#9a9a9a" stroke="#d8d8d8" stroke-width="0.7"/></svg>
<svg style="position:absolute;left:31.5px;top:325px;" width="7" height="6" viewBox="0 0 7 6"><rect x="0.5" y="0.5" width="4" height="3.6" fill="none" stroke="#cfcfcf" stroke-width="0.8"/><circle cx="4.4" cy="3.6" r="2" fill="#9a9a9a" stroke="#d8d8d8" stroke-width="0.7"/></svg>
<div style="position:absolute;left:18.5px;top:338.5px;width:9px;height:6.5px;background:#7a7a7a;box-shadow:0 0 0 0.8px #d0d0d0"></div>
<div style="position:absolute;left:16px;top:341px;width:8px;height:6px;background:#5a5a5a;box-shadow:0 0 0 0.8px #d0d0d0"></div>
<div style="position:absolute;left:46px;top:101.5px;width:20.5px;height:1px;background:#363636;"></div>
<div style="position:absolute;left:46px;top:141.5px;width:20.5px;height:1px;background:#363636;"></div>
<div style="position:absolute;left:46px;top:164.7px;width:20.5px;height:1px;background:#363636;"></div>
<div style="position:absolute;left:46px;top:205.5px;width:20.5px;height:1px;background:#363636;"></div>
<div style="position:absolute;left:46px;top:261px;width:20.5px;height:1px;background:#363636;"></div>
<div style="position:absolute;left:46px;top:286px;width:20.5px;height:1px;background:#363636;"></div>
<div style="position:absolute;left:50px;top:48.5px;width:11.2px;height:2.2px;background:#333;"></div>
<div style="position:absolute;left:50px;top:104.3px;width:11.2px;height:2.2px;background:#333;"></div>
<div style="position:absolute;left:50px;top:144.6px;width:11.2px;height:2.2px;background:#333;"></div>
<div style="position:absolute;left:50px;top:167.8px;width:11.2px;height:2.2px;background:#333;"></div>
<div style="position:absolute;left:50px;top:208.6px;width:11.2px;height:2.2px;background:#333;"></div>
<div style="position:absolute;left:50px;top:264px;width:11.2px;height:2.2px;background:#333;"></div>
<div style="position:absolute;left:48.2px;top:85.8px;width:16.2px;height:13px;background:#2d2d2d;border-radius:1px"></div>
<svg style="position:absolute;left:50.3px;top:54.5px;" width="12" height="12" viewBox="0 0 12 12"><path d="M1 6.5 Q1 2.5 6 2.5 Q11.3 2.5 11.3 6 Q11.3 8 9 7.8 Q7.5 7.8 8 9 Q8.2 10.3 6 10.3 Q1 10.3 1 6.5 Z" fill="#bdbdbd"/><circle cx="3.6" cy="6" r="0.9" fill="#484848"/><circle cx="5.5" cy="4.3" r="0.9" fill="#484848"/><circle cx="8" cy="4.6" r="0.9" fill="#484848"/><circle cx="4.6" cy="8.2" r="0.9" fill="#484848"/></svg>
<svg style="position:absolute;left:50.3px;top:70.0px;" width="12" height="12" viewBox="0 0 12 12"><rect x="1" y="2.5" width="10" height="7.5" fill="#bdbdbd"/><rect x="2" y="3.5" width="2.2" height="2.4" fill="#484848"/><rect x="4.9" y="3.5" width="2.2" height="2.4" fill="#484848"/><rect x="7.8" y="3.5" width="2.2" height="2.4" fill="#484848"/><rect x="2" y="6.7" width="2.2" height="2.4" fill="#484848"/><rect x="4.9" y="6.7" width="2.2" height="2.4" fill="#8a8a8a"/><rect x="7.8" y="6.7" width="2.2" height="2.4" fill="#484848"/></svg>
<svg style="position:absolute;left:50.3px;top:86.4px;" width="12" height="12" viewBox="0 0 12 12"><defs><linearGradient id="dg" x1="0" x2="1"><stop offset="0" stop-color="#e8e8e8"/><stop offset="1" stop-color="#3a3a3a"/></linearGradient></defs><rect x="1" y="2.4" width="10" height="7.4" fill="url(#dg)" stroke="#bdbdbd" stroke-width="0.8"/></svg>
<svg style="position:absolute;left:50.3px;top:110.0px;" width="12" height="12" viewBox="0 0 12 12"><rect x="1.5" y="1.5" width="5" height="3.6" fill="#bdbdbd"/><rect x="1.5" y="6.6" width="9" height="3.6" fill="#bdbdbd"/><path d="M1 0.8 V11" stroke="#bdbdbd" stroke-width="0.8"/></svg>
<svg style="position:absolute;left:50.3px;top:126.4px;" width="12" height="12" viewBox="0 0 12 12"><rect x="1.2" y="1.2" width="6" height="6" fill="#bdbdbd"/><rect x="4.6" y="4.6" width="6" height="6" fill="#8a8a8a" stroke="#bdbdbd" stroke-width="0.8"/></svg>
<svg style="position:absolute;left:50.3px;top:150.0px;" width="12" height="12" viewBox="0 0 12 12"><path d="M1 2.5 H11" stroke="#bdbdbd" stroke-width="1.6"/><path d="M1 6 H11" stroke="#bdbdbd" stroke-width="1.2"/><path d="M1 9.3 H11" stroke="#bdbdbd" stroke-width="0.8"/></svg>
<svg style="position:absolute;left:50.3px;top:174.0px;" width="12" height="12" viewBox="0 0 12 12"><path d="M1.5 10.5 L4.8 1.5 L8 10.5 M2.8 7.3 H6.8" fill="none" stroke="#bdbdbd" stroke-width="1.2"/><path d="M10 1 V11" stroke="#bdbdbd" stroke-width="0.9"/></svg>
<svg style="position:absolute;left:50.3px;top:190.0px;" width="12" height="12" viewBox="0 0 12 12"><path d="M7 1.5 V10.8 M9 1.5 V10.8 M10.3 1.5 H5.5 A2.6 2.6 0 0 0 5.5 6.7 H7" fill="#bdbdbd" stroke="#bdbdbd" stroke-width="0.9"/></svg>
<svg style="position:absolute;left:50.3px;top:214.0px;" width="12" height="12" viewBox="0 0 12 12"><path d="M1 10.3 V2 H4.5 L5.5 3.4 H11 V10.3 Z" fill="none" stroke="#bdbdbd" stroke-width="1"/><rect x="2.6" y="5.6" width="6.8" height="3" fill="#9a9a9a"/></svg>
<svg style="position:absolute;left:50.3px;top:230.0px;" width="12" height="12" viewBox="0 0 12 12"><path d="M1 10.3 V2 H4.5 L5.5 3.4 H11 V10.3 Z" fill="none" stroke="#bdbdbd" stroke-width="1"/><rect x="2.6" y="5.6" width="6.8" height="3" fill="#9a9a9a"/></svg>
<svg style="position:absolute;left:50.3px;top:246.0px;" width="12" height="12" viewBox="0 0 12 12"><circle cx="6" cy="3.6" r="2.4" fill="#bdbdbd"/><circle cx="3.4" cy="6.8" r="2.4" fill="#bdbdbd"/><circle cx="8.6" cy="6.8" r="2.4" fill="#bdbdbd"/><path d="M6 6 L4.6 11 H7.4 Z" fill="#bdbdbd"/></svg>
<svg style="position:absolute;left:50.3px;top:270.0px;" width="12" height="12" viewBox="0 0 12 12"><defs><linearGradient id="fg" x1="0" x2="1" y1="1" y2="0"><stop offset="0" stop-color="#3a3a3a"/><stop offset="1" stop-color="#e0e0e0"/></linearGradient></defs><path d="M1.5 10.5 V1.5 Q10.5 2 10.5 10.5 Z" fill="url(#fg)" stroke="#bdbdbd" stroke-width="0.8"/></svg>
<div style="position:absolute;left:965.5px;top:51px;width:10.5px;height:489px;background:#3b3b3b;"></div>
<svg style="position:absolute;left:968.0px;top:55.4px" width="5" height="3.2" viewBox="0 0 5 3.2"><polygon points="0,3.2 5,3.2 2.5,0" fill="#e8e8e8"/></svg>
<svg style="position:absolute;left:968.0px;top:532.9px" width="5" height="3.2" viewBox="0 0 5 3.2"><polygon points="0,0 5,0 2.5,3.2" fill="#e8e8e8"/></svg>
<div style="position:absolute;left:966.5px;top:278.5px;width:8px;height:8px;background:#a2a2a2;"></div>
<div style="position:absolute;left:973.5px;top:39.5px;width:26.5px;height:7.2px;background:#383838;"></div>
<div style="position:absolute;left:976px;top:47px;width:22.5px;height:505px;background:#484848;"></div>
<div style="position:absolute;left:998.5px;top:40px;width:1.5px;height:512px;background:#303030;"></div>
<div style="position:absolute;left:975.5px;top:40px;width:1px;height:512px;background:#333;"></div>
<svg style="position:absolute;left:990.8px;top:42px;" width="4.6" height="3" viewBox="0 0 4.6 3"><path d="M2 0 L0 1.5 L2 3 Z M4.6 0 L2.6 1.5 L4.6 3 Z" fill="#c8c8c8"/></svg>
<div style="position:absolute;left:976px;top:86.5px;width:22.5px;height:1.2px;background:#333;"></div>
<div style="position:absolute;left:976px;top:109.5px;width:22.5px;height:1.2px;background:#333;"></div>
<div style="position:absolute;left:976px;top:166px;width:22.5px;height:1.2px;background:#333;"></div>
<div style="position:absolute;left:981.2px;top:48.9px;width:11.2px;height:2.2px;background:#333;"></div>
<div style="position:absolute;left:981.2px;top:88.9px;width:11.2px;height:2.2px;background:#333;"></div>
<div style="position:absolute;left:981.2px;top:111.9px;width:11.2px;height:2.2px;background:#333;"></div>
<svg style="position:absolute;left:981.0px;top:54.5px;" width="12" height="12" viewBox="0 0 12 12"><path d="M6 1 L11.5 4 L6 7 L0.5 4 Z" fill="#e0e0e0"/><path d="M1 6.5 L6 9.3 L11 6.5" fill="none" stroke="#e0e0e0" stroke-width="1.3"/></svg>
<svg style="position:absolute;left:981.0px;top:70.5px;" width="12" height="12" viewBox="0 0 12 12"><rect x="1" y="1" width="6.5" height="6.5" fill="none" stroke="#d0d0d0" stroke-width="1"/><rect x="4.5" y="4.5" width="6.5" height="6.5" fill="#6a6a6a" stroke="#d0d0d0" stroke-width="1"/></svg>
<div class="t" style="left:982px;top:93px;height:16px;line-height:16px;font-family:'Liberation Serif',serif;font-style:italic;font-weight:bold;font-size:14px;color:#d8d8d8">O</div>
<svg style="position:absolute;left:981.0px;top:118.5px;" width="12" height="12" viewBox="0 0 12 12"><path d="M3.2 9.6 A2.7 2.7 0 0 1 2.4 4.4 A3.5 3.5 0 0 1 8.9 3.7 A3 3 0 0 1 9 9.6 Z" fill="#7c7c7c" stroke="#e0e0e0" stroke-width="1"/><circle cx="4.7" cy="6.8" r="1.5" fill="none" stroke="#e0e0e0" stroke-width="0.8"/><circle cx="7.3" cy="6.5" r="1.7" fill="none" stroke="#e0e0e0" stroke-width="0.8"/></svg>
<svg style="position:absolute;left:981.0px;top:134.5px;" width="12" height="12" viewBox="0 0 12 12"><circle cx="6" cy="6" r="3.3" fill="#d0d0d0"/><circle cx="6" cy="6" r="5" fill="none" stroke="#d0d0d0" stroke-width="0.9" stroke-dasharray="1.4 1"/></svg>
<svg style="position:absolute;left:981.0px;top:151.0px;" width="12" height="12" viewBox="0 0 12 12"><rect x="3.5" y="1" width="7.5" height="7.5" fill="none" stroke="#d0d0d0" stroke-width="1"/><rect x="1" y="6" width="4.5" height="4.5" fill="#6a6a6a" stroke="#d0d0d0" stroke-width="0.9"/></svg>
<div style="position:absolute;left:68px;top:540px;width:908px;height:9.5px;background:#474747;"></div>
<div style="position:absolute;left:0px;top:549.5px;width:1000px;height:2.5px;background:#4a4a4a;"></div>
<div style="position:absolute;left:0px;top:549.2px;width:1000px;height:1px;background:#2e2e2e;"></div>
<div style="position:absolute;left:352px;top:540px;width:613.5px;height:9.5px;background:#3b3b3b;"></div>
<div style="position:absolute;left:965.5px;top:540px;width:10.5px;height:9.5px;background:#555;"></div>
<svg style="position:absolute;left:72px;top:541.5px;" width="10" height="6.5" viewBox="0 0 10 6.5"><rect x="0.5" y="0.5" width="11" height="5.5" fill="none" stroke="#6a6a6a" stroke-width="0.8"/><path d="M3 2 L5 4 M7 2 L5 4" stroke="#6a6a6a" stroke-width="0.7"/></svg>
<svg style="position:absolute;left:89.5px;top:541.5px;" width="8" height="6.5" viewBox="0 0 8 6.5"><path d="M0.5 2 V6 H6 V4.5" fill="none" stroke="#cfcfcf" stroke-width="0.9"/><path d="M2.5 4 Q3 1.5 6 1.5 M5 0 L7.3 1.5 L5 3" fill="none" stroke="#cfcfcf" stroke-width="0.9"/></svg>
<div style="position:absolute;left:103.3px;top:541.2px;width:30.5px;height:7.5px;background:#aeaeae;box-sizing:border-box;border-top:1px solid #6e6e6e;border-left:1px solid #808080"><div class="t" style="left:1.5px;top:-1.8499999999999996px;color:#000;font-size:6.3px">200%</div></div>
<div style="position:absolute;left:134.3px;top:541.2px;width:8px;height:7.5px;background:#3c3c3c;box-sizing:border-box;border:0.5px solid #2e2e2e"></div>
<svg style="position:absolute;left:136.5px;top:544.15px" width="3.6" height="2.2" viewBox="0 0 3.6 2.2"><polygon points="0,0 3.6,0 1.8,2.2" fill="#dcdcdc"/></svg>
<svg style="position:absolute;left:147.5px;top:542.5px;" width="5" height="5" viewBox="0 0 5 5"><path d="M0.5 0 V5" stroke="#cfcfcf" stroke-width="0.9"/><path d="M5 0 L1.5 2.5 L5 5 Z" fill="#cfcfcf"/></svg>
<svg style="position:absolute;left:158.5px;top:542.5px" width="3" height="5" viewBox="0 0 3 5"><polygon points="3,0 0,2.5 3,5" fill="#cfcfcf"/></svg>
<div style="position:absolute;left:167px;top:541.2px;width:24px;height:7.5px;background:#aeaeae;box-sizing:border-box;border-top:1px solid #6e6e6e;border-left:1px solid #808080"><div class="t" style="left:1.5px;top:-1.8499999999999996px;color:#000;font-size:6.3px">4</div></div>
<div style="position:absolute;left:191.7px;top:541.2px;width:8px;height:7.5px;background:#3c3c3c;box-sizing:border-box;border:0.5px solid #2e2e2e"></div>
<svg style="position:absolute;left:193.89999999999998px;top:544.15px" width="3.6" height="2.2" viewBox="0 0 3.6 2.2"><polygon points="0,0 3.6,0 1.8,2.2" fill="#dcdcdc"/></svg>
<svg style="position:absolute;left:205.5px;top:542.5px" width="3" height="5" viewBox="0 0 3 5"><polygon points="0,0 3,2.5 0,5" fill="#cfcfcf"/></svg>
<svg style="position:absolute;left:214.5px;top:542.5px;" width="5" height="5" viewBox="0 0 5 5"><path d="M4.5 0 V5" stroke="#cfcfcf" stroke-width="0.9"/><path d="M0 0 L3.5 2.5 L0 5 Z" fill="#cfcfcf"/></svg>
<div class="t" style="left:276px;top:540.2px;color:#d8d8d8;font-size:7px;">选择</div>
<svg style="position:absolute;left:343.5px;top:542.5px" width="3" height="5" viewBox="0 0 3 5"><polygon points="0,0 3,2.5 0,5" fill="#dcdcdc"/></svg>
<svg style="position:absolute;left:354.3px;top:542.3px" width="3.4" height="5.4" viewBox="0 0 3.4 5.4"><polygon points="3.4,0 0,2.7 3.4,5.4" fill="#eeeeee"/></svg>
<svg style="position:absolute;left:957.3px;top:542.3px" width="3.4" height="5.4" viewBox="0 0 3.4 5.4"><polygon points="0,0 3.4,2.7 0,5.4" fill="#eeeeee"/></svg>
<div style="position:absolute;left:682px;top:541px;width:8px;height:7.5px;background:#a2a2a2;"></div>
<div style="position:absolute;left:67px;top:45.6px;width:230px;height:266px;background:#333;"></div>
<div style="position:absolute;left:68px;top:46.2px;width:228px;height:11.8px;background:#383838;"></div>
<div style="position:absolute;left:68px;top:58px;width:228px;height:249px;background:#4a4a4a;"></div>
<div style="position:absolute;left:68px;top:307px;width:228px;height:4px;background:#404040;"></div>
<div style="position:absolute;left:176px;top:308.5px;width:12px;height:1.5px;background:#2c2c2c;"></div>
<div style="position:absolute;left:68px;top:46.5px;width:44.5px;height:11.5px;background:#424242;"></div>
<div class="t" style="left:72px;top:47px;color:#9a9a9a;font-size:6.7px;">颜色</div>
<div style="position:absolute;left:91.5px;top:46.5px;width:0.8px;height:11.5px;background:#2c2c2c;"></div>
<div class="t" style="left:95px;top:47px;color:#9a9a9a;font-size:6.7px;">色板</div>
<div style="position:absolute;left:112.5px;top:46.5px;width:26px;height:11.5px;background:#4a4a4a;"></div>
<svg style="position:absolute;left:114.5px;top:49px;" width="3" height="6" viewBox="0 0 3 6"><path d="M0 2.4 L1.5 0.4 L3 2.4 Z M0 3.6 L1.5 5.6 L3 3.6 Z" fill="#d0d0d0"/></svg>
<div class="t" style="left:119px;top:47px;color:#e6e6e6;font-size:6.7px;">渐变</div>
<svg style="position:absolute;left:271.5px;top:50px;" width="7" height="3.5" viewBox="0 0 7 3.5"><path d="M3 0 L0 1.75 L3 3.5 Z M7 0 L4 1.75 L7 3.5 Z" fill="#c8c8c8"/></svg>
<div style="position:absolute;left:282px;top:48px;width:0.8px;height:7px;background:#555;"></div>
<svg style="position:absolute;left:285.5px;top:49.5px;" width="8" height="5" viewBox="0 0 8 5"><path d="M0 0.6 L2.4 0.6 L1.2 2.2 Z" fill="#c0c0c0"/><path d="M3 0.5 H8 M3 2.3 H8 M3 4.1 H8" stroke="#c0c0c0" stroke-width="0.8"/></svg>
<div style="position:absolute;left:71px;top:62px;width:17px;height:16.5px;background:radial-gradient(circle at 50% 50%,#f2ecec 0%,#b9aeae 28%,#5e5353 55%,#221a1a 80%,#181212 100%);box-shadow:0 0 0 0.6px #2a2a2a"></div>
<svg style="position:absolute;left:91.0px;top:69.35px" width="2.8" height="1.9" viewBox="0 0 2.8 1.9"><polygon points="0,0 2.8,0 1.4,1.9" fill="#d0d0d0"/></svg>
<div class="t" style="left:99.5px;top:63px;color:#e0e0e0;font-size:6.9px;">类型:</div>
<div style="position:absolute;left:121px;top:62px;width:171.5px;height:10.5px;background:#626262;box-sizing:border-box;border:0.6px solid #3a3a3a"></div>
<svg style="position:absolute;left:285.6px;top:66.3px" width="3.8" height="2.4" viewBox="0 0 3.8 2.4"><polygon points="0,0 3.8,0 1.9,2.4" fill="#e0e0e0"/></svg>
<div class="t" style="left:100px;top:78px;color:#7a7a7a;font-size:6.9px;">描边:</div>
<div style="position:absolute;left:122px;top:77px;width:12.5px;height:11.5px;background:#555;box-sizing:border-box;border:0.6px solid #424242"><div style="position:absolute;left:3px;top:2.5px;width:6px;height:6px;border-left:1px solid #6e6e6e;border-top:1px solid #6e6e6e"></div></div>
<div style="position:absolute;left:135.3px;top:77px;width:12.5px;height:11.5px;background:#555;box-sizing:border-box;border:0.6px solid #424242"><div style="position:absolute;left:3px;top:2.5px;width:6px;height:6px;border-left:1px solid #6e6e6e;border-top:1px solid #6e6e6e"></div></div>
<div style="position:absolute;left:148.8px;top:77px;width:12.5px;height:11.5px;background:#555;box-sizing:border-box;border:0.6px solid #424242"><div style="position:absolute;left:3px;top:2.5px;width:6px;height:6px;border-left:1px solid #6e6e6e;border-top:1px solid #6e6e6e"></div></div>
<div style="position:absolute;left:76.8px;top:88.8px;width:11.2px;height:11.2px;background:#ffffff;overflow:hidden;box-shadow:0 0 0 0.5px #333"><svg width="11.2" height="11.2" style="position:absolute;left:0;top:0"><path d="M0 11.2 L11.2 0" stroke="#c0202a" stroke-width="1.6"/><rect x="3.4" y="3.4" width="4.4" height="4.4" fill="#6b2e30"/></svg></div>
<div style="position:absolute;left:72px;top:83px;width:10.5px;height:10.5px;background:#ffffff;box-shadow:0 0 0 0.5px #333"></div>
<svg style="position:absolute;left:112px;top:94px;" width="6" height="8" viewBox="0 0 6 8"><path d="M0.5 7 H5.5 L3 1.5 Z" fill="none" stroke="#6e6e6e" stroke-width="0.8"/></svg>
<svg style="position:absolute;left:110px;top:109px;" width="9" height="8" viewBox="0 0 9 8"><rect x="0.5" y="2" width="5" height="5" fill="none" stroke="#6e6e6e" stroke-width="0.8"/><path d="M6.5 2 V7 M5.6 3 L6.5 2 L7.4 3 M5.6 6 L6.5 7 L7.4 6" fill="none" stroke="#6e6e6e" stroke-width="0.6"/></svg>
<svg style="position:absolute;left:75px;top:106px;" width="9" height="9" viewBox="0 0 9 9"><path d="M0.5 1.5 H4 M0.5 4.5 H4 M0.5 7.5 H4 M5 1.5 H8.5 M5 4.5 H8.5 M5 7.5 H8.5" stroke="#626262" stroke-width="0.9"/></svg>
<div style="position:absolute;left:121px;top:93px;width:39.5px;height:10px;background:#787878;box-sizing:border-box;border:0.6px solid #5a5a5a"></div>
<div style="position:absolute;left:152.0px;top:93.6px;width:0.8px;height:8.8px;background:#606060;"></div>
<svg style="position:absolute;left:154.60000000000002px;top:97.2px" width="3.4" height="2.2" viewBox="0 0 3.4 2.2"><polygon points="0,0 3.4,0 1.7,2.2" fill="#a8a8a8"/></svg>
<div style="position:absolute;left:121px;top:108px;width:39.5px;height:10px;background:#787878;box-sizing:border-box;border:0.6px solid #5a5a5a"></div>
<div style="position:absolute;left:152.0px;top:108.6px;width:0.8px;height:8.8px;background:#606060;"></div>
<svg style="position:absolute;left:154.60000000000002px;top:112.2px" width="3.4" height="2.2" viewBox="0 0 3.4 2.2"><polygon points="0,0 3.4,0 1.7,2.2" fill="#a8a8a8"/></svg>
<div style="position:absolute;left:74px;top:127px;width:201.3px;height:133.8px;background:linear-gradient(to right,#ffffff 0%,#e4e2e2 12%,#bdb9b9 30%,#918b8a 50%,#655c5a 68%,#3f3432 84%,#261b1a 100%);box-shadow:0 0 0 0.6px #383838"></div>
<svg style="position:absolute;left:283.5px;top:130px;" width="6" height="7" viewBox="0 0 6 7"><path d="M0 0.8 H6 M0 2.8 H6 M0 4.8 H6 M0 6.6 H6" stroke="#5e5e5e" stroke-width="0.7"/></svg>
<div class="t" style="left:86px;top:278px;color:#7e7e7e;font-size:6.9px;letter-spacing:0.15px">不透明度:</div>
<div class="t" style="left:100.3px;top:293px;color:#7e7e7e;font-size:6.9px;letter-spacing:0.15px">位置:</div>
<div style="position:absolute;left:121px;top:278px;width:39.5px;height:9.5px;background:#787878;box-sizing:border-box;border:0.6px solid #5a5a5a"></div>
<div style="position:absolute;left:152.0px;top:278.6px;width:0.8px;height:8.3px;background:#606060;"></div>
<svg style="position:absolute;left:154.60000000000002px;top:281.95px" width="3.4" height="2.2" viewBox="0 0 3.4 2.2"><polygon points="0,0 3.4,0 1.7,2.2" fill="#a8a8a8"/></svg>
<div style="position:absolute;left:121px;top:293px;width:39.5px;height:9.5px;background:#787878;box-sizing:border-box;border:0.6px solid #5a5a5a"></div>
<div style="position:absolute;left:152.0px;top:293.6px;width:0.8px;height:8.3px;background:#606060;"></div>
<svg style="position:absolute;left:154.60000000000002px;top:296.95px" width="3.4" height="2.2" viewBox="0 0 3.4 2.2"><polygon points="0,0 3.4,0 1.7,2.2" fill="#a8a8a8"/></svg>
<svg style="position:absolute;left:289px;top:300px;" width="5" height="5" viewBox="0 0 5 5"><path d="M5 0 L0 5 M5 2 L2 5 M5 4 L4 5" stroke="#3a3a3a" stroke-width="0.6"/></svg>
<div style="position:absolute;left:305.5px;top:62.5px;width:136px;height:81px;background:#303030;"></div>
<div style="position:absolute;left:306px;top:63px;width:135px;height:8px;background:#383838;"></div>
<div style="position:absolute;left:306px;top:71px;width:135px;height:11px;background:#3c3c3c;"></div>
<div style="position:absolute;left:306px;top:82px;width:135px;height:61px;background:#4a4a4a;"></div>
<div style="position:absolute;left:306px;top:70.5px;width:34px;height:11.5px;background:#4a4a4a;"></div>
<svg style="position:absolute;left:308px;top:74px;" width="2.6" height="5" viewBox="0 0 2.6 5"><path d="M0 2 L1.3 0.3 L2.6 2 Z M0 3 L1.3 4.7 L2.6 3 Z" fill="#d0d0d0"/></svg>
<div class="t" style="left:314px;top:71.5px;color:#e8e8e8;font-size:7.1px;">透明度</div>
<svg style="position:absolute;left:424.5px;top:65.5px;" width="6" height="3.2" viewBox="0 0 6 3.2"><path d="M2.6 0 L0 1.6 L2.6 3.2 Z M6 0 L3.4 1.6 L6 3.2 Z" fill="#c8c8c8"/></svg>
<svg style="position:absolute;left:434.5px;top:65px;" width="4" height="4" viewBox="0 0 4 4"><path d="M0.3 0.3 L3.7 3.7 M3.7 0.3 L0.3 3.7" stroke="#d0d0d0" stroke-width="1"/></svg>
<svg style="position:absolute;left:430.5px;top:74.5px;" width="8" height="5" viewBox="0 0 8 5"><path d="M0 0.6 L2.4 0.6 L1.2 2.2 Z" fill="#c0c0c0"/><path d="M3 0.5 H8 M3 2.3 H8 M3 4.1 H8" stroke="#c0c0c0" stroke-width="0.8"/></svg>
<div style="position:absolute;left:311px;top:86px;width:48.5px;height:10.5px;background:#636363;box-sizing:border-box;border:0.6px solid #3a3a3a"></div>
<div class="t" style="left:315px;top:86.3px;color:#ececec;font-size:6.9px;">正常</div>
<svg style="position:absolute;left:352.1px;top:90.3px" width="3.8" height="2.4" viewBox="0 0 3.8 2.4"><polygon points="0,0 3.8,0 1.9,2.4" fill="#e8e8e8"/></svg>
<div class="t" style="left:363.5px;top:86.3px;color:#e0e0e0;font-size:6.9px;letter-spacing:0.1px">不透明度:</div>
<div style="position:absolute;left:399px;top:86px;width:29.5px;height:10.5px;background:#aeaeae;box-sizing:border-box;border-top:1px solid #6e6e6e;border-left:1px solid #808080"><div class="t" style="left:1.5px;top:-0.34999999999999964px;color:#000;font-size:6.4px">100%</div></div>
<div style="position:absolute;left:428.5px;top:86px;width:9.5px;height:10.5px;background:#5e5e5e;box-sizing:border-box;border:0.6px solid #3a3a3a"></div>
<svg style="position:absolute;left:432.2px;top:89.2px" width="2.6" height="4.2" viewBox="0 0 2.6 4.2"><polygon points="0,0 2.6,2.1 0,4.2" fill="#e8e8e8"/></svg>
<div style="position:absolute;left:306px;top:100px;width:135px;height:0.7px;background:#444;"></div>
<div style="position:absolute;left:311.5px;top:107.5px;width:28px;height:28px;background:#ffffff;box-shadow:0 0 0 0.6px #333"></div>
<div style="position:absolute;left:355px;top:107px;width:29.5px;height:29px;background:#505050;box-sizing:border-box;border:0.8px solid #8a8a8a"></div>
<svg style="position:absolute;left:362.5px;top:114.5px;" width="15" height="15" viewBox="0 0 15 15"><circle cx="7.5" cy="7.5" r="5.8" fill="none" stroke="#b4b4b4" stroke-width="2"/><path d="M3.4 3.4 L11.6 11.6" stroke="#b4b4b4" stroke-width="2"/></svg>
<div style="position:absolute;left:390px;top:105px;width:39.5px;height:10.5px;background:#626262;box-sizing:border-box;border:0.6px solid #393939;border-radius:1px"></div>
<div class="t" style="left:394.5px;top:105.3px;color:#ececec;font-size:6.9px;letter-spacing:0.2px">制作蒙版</div>
<div style="position:absolute;left:391.5px;top:121.5px;width:5px;height:5px;background:#505050;box-sizing:border-box;border:0.6px solid #454545"></div>
<div class="t" style="left:399.5px;top:119.5px;color:#7c7c7c;font-size:6.9px;">剪切</div>
<div style="position:absolute;left:391.5px;top:132.5px;width:5px;height:5px;background:#505050;box-sizing:border-box;border:0.6px solid #454545"></div>
<div class="t" style="left:399.5px;top:130.5px;color:#7c7c7c;font-size:6.9px;">反相蒙版</div>
<div style="position:absolute;left:645.5px;top:76.5px;width:197px;height:248.5px;background:linear-gradient(to bottom,#a6a8b2 0px,#b4b6c0 60px,#c4c6d0 70px,#5a5e6a 74px,#4c505c 120px,#4a4e5a 149px,#dfeaf6 152px,#c9dcf0 160px,#c4d8ee 100%);border-radius:3.5px;box-shadow:0 0 0 0.7px #3c4656,0 2px 7px 1px rgba(40,40,50,0.55)"></div>
<div style="position:absolute;left:646.3px;top:77.3px;width:195.4px;height:16px;background:linear-gradient(to right,#a4a6af 0%,#989aa4 10%,#6e707c 18%,#3a3a49 26%,#2a2a39 34%,#262635 50%,#2b2b3a 64%,#4d4e60 72%,#74767f 84%,#7e8088 100%);border-radius:3px 3px 0 0;box-shadow:inset 0 0.8px 0 rgba(255,255,255,0.45)"></div>
<div style="position:absolute;left:648.5px;top:92.1px;width:191px;height:0.9px;background:rgba(200,205,215,0.55);"></div>
<div class="t" style="left:650px;top:79.3px;font-size:7px;color:#15151c;text-shadow:0 0 2px rgba(255,255,255,0.75),0 0 3px rgba(255,255,255,0.5)">比例缩放</div>
<div style="position:absolute;left:649px;top:93px;width:190.5px;height:227px;background:#4b4b4b;box-shadow:0 0 0 0.6px #30343c"></div>
<div style="position:absolute;left:659.5px;top:110.5px;width:169px;height:77.5px;background:transparent;box-sizing:border-box;border:0.8px solid #3c3c3c;box-shadow:inset 0.6px 0.6px 0 #565656, 0.6px 0.6px 0 #565656"></div>
<div style="position:absolute;left:663px;top:106px;width:32.5px;height:9px;background:#4b4b4b;"></div>
<div class="t d" style="left:664.5px;top:105.8px;color:#e6e6e6;font-size:7.3px;">比例缩放</div>
<svg style="position:absolute;left:665px;top:123px;" width="5.6" height="5.6" viewBox="0 0 5.6 5.6"><circle cx="2.8" cy="2.8" r="2.3" fill="#555" stroke="#6c6c6c" stroke-width="0.8"/></svg>
<div class="t d" style="left:675px;top:120.8px;color:#e2e2e2;font-size:7.3px;">等比 (U):</div>
<div style="position:absolute;left:709px;top:121px;width:35.5px;height:9px;background:#a0a0a0;box-sizing:border-box;border-top:0.8px solid #6a6a6a;border-left:0.8px solid #7a7a7a"><div class="t" style="left:1px;top:-1.0999999999999996px;color:#151515;font-size:6.6px;letter-spacing:0.2px">93%</div></div>
<svg style="position:absolute;left:665px;top:138.5px;" width="5.6" height="5.6" viewBox="0 0 5.6 5.6"><circle cx="2.8" cy="2.8" r="2.3" fill="#3a3a3a" stroke="#2e2e2e" stroke-width="0.8"/><circle cx="2.8" cy="2.8" r="1.2" fill="#f4f4f4"/></svg>
<div class="t d" style="left:675px;top:136.3px;color:#e2e2e2;font-size:7.3px;">不等比 (N)</div>
<div class="t d" style="left:675px;top:152.6px;color:#e2e2e2;font-size:7.3px;">水平 (H):</div>
<div style="position:absolute;left:709px;top:153px;width:35.5px;height:9px;background:#a0a0a0;box-sizing:border-box;border-top:0.8px solid #6a6a6a;border-left:0.8px solid #7a7a7a"><div class="t" style="left:1px;top:-1.0999999999999996px;color:#151515;font-size:6.6px;letter-spacing:0.2px">100%</div></div>
<div class="t d" style="left:675px;top:170.3px;color:#e2e2e2;font-size:7.3px;">垂直 (V):</div>
<div style="position:absolute;left:709px;top:170.5px;width:35.5px;height:9px;background:#a0a0a0;box-sizing:border-box;border-top:0.8px solid #6a6a6a;border-left:0.8px solid #7a7a7a"><div class="t" style="left:1px;top:-1.0999999999999996px;color:#151515;font-size:6.6px;letter-spacing:0.2px">85%</div></div>
<div style="position:absolute;left:659.5px;top:203.5px;width:169px;height:54px;background:transparent;box-sizing:border-box;border:0.8px solid #3c3c3c;box-shadow:inset 0.6px 0.6px 0 #565656, 0.6px 0.6px 0 #565656"></div>
<div style="position:absolute;left:663px;top:199px;width:17.5px;height:9px;background:#4b4b4b;"></div>
<div class="t d" style="left:664.5px;top:198.8px;color:#e6e6e6;font-size:7.3px;">选项</div>
<svg style="position:absolute;left:665.7px;top:212.10000000000002px;" width="6.5" height="6" viewBox="0 0 6.5 6"><path d="M0.6 3 L2.4 5 L6 0.6" fill="none" stroke="#f0f0f0" stroke-width="1.3"/></svg>
<div class="t d" style="left:674.5px;top:210.5px;color:#e2e2e2;font-size:7.3px;">缩放矩形圆角 (S)</div>
<svg style="position:absolute;left:665.7px;top:227.10000000000002px;" width="6.5" height="6" viewBox="0 0 6.5 6"><path d="M0.6 3 L2.4 5 L6 0.6" fill="none" stroke="#f0f0f0" stroke-width="1.3"/></svg>
<div class="t d" style="left:674.5px;top:225.5px;color:#e2e2e2;font-size:7.3px;">比例缩放描边和效果 (E)</div>
<svg style="position:absolute;left:665.7px;top:241.8px;" width="6.5" height="6" viewBox="0 0 6.5 6"><path d="M0.6 3 L2.4 5 L6 0.6" fill="none" stroke="#f0f0f0" stroke-width="1.3"/></svg>
<div class="t d" style="left:674.5px;top:240.2px;color:#e2e2e2;font-size:7.3px;">变换对象 (O)</div>
<div style="position:absolute;left:725.5px;top:242.5px;width:5px;height:5px;background:#5a5a5a;box-sizing:border-box;border:0.6px solid #6a6a6a"></div>
<div class="t d" style="left:734px;top:240.2px;color:#cfcfcf;font-size:7.3px;">变换图案 (T)</div>
<div style="position:absolute;left:659px;top:266.5px;width:7.5px;height:8px;background:#4b4b4b;box-sizing:border-box;border:0.9px solid #d79a55;border-radius:0.8px"></div>
<svg style="position:absolute;left:660px;top:267.1px;" width="6.5" height="6" viewBox="0 0 6.5 6"><path d="M0.6 3 L2.4 5 L6 0.6" fill="none" stroke="#f0f0f0" stroke-width="1.3"/></svg>
<div class="t d" style="left:669px;top:266.3px;color:#e2e2e2;font-size:7.3px;">预览 (P)</div>
<div style="position:absolute;left:660px;top:289.3px;width:50.5px;height:13px;background:linear-gradient(to bottom,#6a6a6a,#5c5c5c);border-radius:1px;text-align:center;box-shadow:0 0 0 0.8px #2a2a2a"><div class="d" style="font-size:7.3px;color:#ececec;line-height:13px;white-space:nowrap">复制 (C)</div></div>
<div style="position:absolute;left:720.5px;top:289.3px;width:52.5px;height:13px;background:linear-gradient(to bottom,#6a6a6a,#5c5c5c);border-radius:1px;text-align:center;box-shadow:0 0 0 1.2px #1e1e1e"><div class="d" style="font-size:7.3px;color:#ececec;line-height:13px;white-space:nowrap">确定</div></div>
<div style="position:absolute;left:777.5px;top:289.3px;width:50.5px;height:13px;background:linear-gradient(to bottom,#6a6a6a,#5c5c5c);border-radius:1px;text-align:center;box-shadow:0 0 0 0.8px #2a2a2a"><div class="d" style="font-size:7.3px;color:#ececec;line-height:13px;white-space:nowrap">取消</div></div>
</body></html>
